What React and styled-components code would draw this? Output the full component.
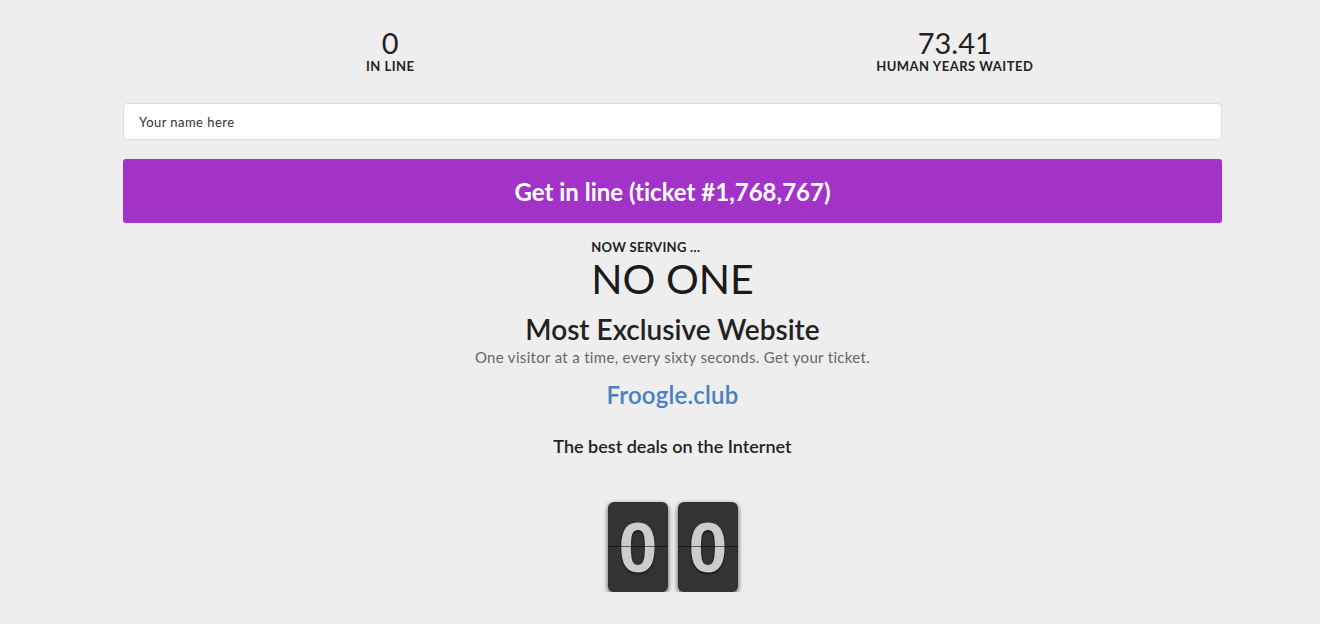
import React from "react";
import styled, { createGlobalStyle } from "styled-components";

const GlobalStyle = createGlobalStyle`
  html, body {
    margin: 0;
    padding: 0;
    background: #eeeeee;
    font-family: Lato, "Open Sans", Arial, sans-serif;
    font-variant-ligatures: none;
    color: #222;
  }
`;

const Container = styled.main`
  width: 1099px;
  margin-left: 123px;
  padding-top: 28px;
  text-align: center;
`;

const StatsRow = styled.div`
  display: grid;
  grid-template-columns: 1fr 1fr;
  margin: 0 -15px;
`;

const Stat = styled.div`
  text-align: center;
`;

const StatValue = styled.div`
  font-size: 29px;
  line-height: 29px;
`;

const StatLabel = styled.div`
  font-size: 13px;
  font-weight: 700;
  letter-spacing: 0.5px;
  text-transform: uppercase;
  line-height: 16px;
  margin-top: 1px;
`;

const NameInput = styled.input`
  display: block;
  box-sizing: border-box;
  width: 100%;
  height: 37px;
  margin-top: 29px;
  padding: 0 15px;
  border: 1px solid #dcdcdc;
  border-radius: 4px;
  background: #fff;
  font-family: inherit;
  font-size: 13px;
  letter-spacing: 0.45px;
  color: #333;
  outline: none;
  &::placeholder {
    color: #333;
  }
`;

const LineButton = styled.button`
  display: block;
  width: 100%;
  height: 64px;
  margin-top: 19px;
  border: none;
  border-radius: 3px;
  background: #a332c8;
  color: #fff;
  font-family: inherit;
  font-variant-ligatures: none;
  font-size: 24px;
  font-weight: 700;
  cursor: pointer;
`;

const Serving = styled.section`
  margin-top: 17px;
`;

const ServingBox = styled.div`
  display: inline-block;
  text-align: left;
`;

const Small = styled.div`
  font-size: 13px;
  font-weight: 700;
  line-height: 14px;
  letter-spacing: 0.3px;
  text-transform: uppercase;
`;

const Who = styled.div`
  font-size: 41px;
  line-height: 49px;
  font-weight: 400;
  color: #1a1a1a;
`;

const Title = styled.h1`
  margin: 10px 0 0;
  font-size: 28px;
  line-height: 32px;
  font-weight: 600;
`;

const Tagline = styled.p`
  margin: 2px 0 0;
  font-size: 15px;
  line-height: 20px;
  letter-spacing: 0.32px;
  color: #666;
`;

const SiteLink = styled.a`
  display: block;
  margin-top: 13px;
  font-size: 24px;
  line-height: 30px;
  font-weight: 600;
  letter-spacing: 0.2px;
  color: #4a7fc1;
  text-decoration: none;
`;

const Deals = styled.p`
  margin: 25px 0 0;
  font-size: 18px;
  line-height: 22px;
  font-weight: 600;
`;

const Clock = styled.div`
  display: flex;
  justify-content: center;
  gap: 10px;
  margin-top: 45px;
  padding-left: 1px;
`;

const Card = styled.div`
  position: relative;
  width: 60px;
  height: 90px;
  border-radius: 6px;
  background: #333;
  box-shadow: 0 2px 5px rgba(0, 0, 0, 0.7);
  color: #ccc;
  font-family: "Liberation Sans", Arial, sans-serif;
  font-size: 70px;
  font-weight: 700;
  line-height: 92px;
  text-align: center;
  text-shadow: 0 1px 2px #000;
  &::after {
    content: "";
    position: absolute;
    left: 0;
    right: 0;
    top: 44px;
    height: 1px;
    background: rgba(0, 0, 0, 0.55);
  }
`;

export default function App() {
  return (
    <>
      <GlobalStyle />
      <Container>
        <StatsRow>
          <Stat>
            <StatValue>0</StatValue>
            <StatLabel>In line</StatLabel>
          </Stat>
          <Stat>
            <StatValue>73.41</StatValue>
            <StatLabel>Human years waited</StatLabel>
          </Stat>
        </StatsRow>

        <NameInput placeholder="Your name here" />
        <LineButton>Get in line (ticket #1,768,767)</LineButton>

        <Serving>
          <ServingBox>
            <Small>Now serving ...</Small>
            <Who>NO ONE</Who>
          </ServingBox>
          <Title>Most Exclusive Website</Title>
          <Tagline>One visitor at a time, every sixty seconds. Get your ticket.</Tagline>
          <SiteLink href="#">Froogle.club</SiteLink>
          <Deals>The best deals on the Internet</Deals>
        </Serving>

        <Clock>
          <Card>0</Card>
          <Card>0</Card>
        </Clock>
      </Container>
    </>
  );
}
